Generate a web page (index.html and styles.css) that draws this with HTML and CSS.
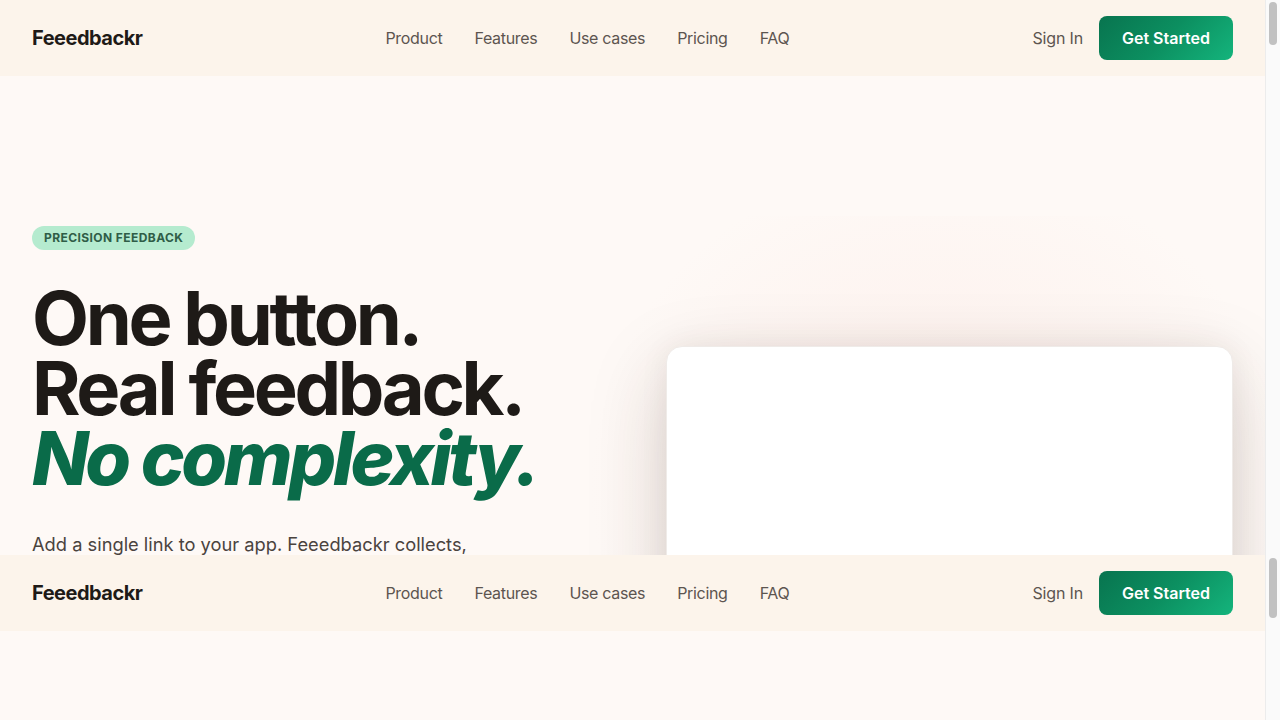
FILE: index.html
```html
<!DOCTYPE html>
<html lang="en">

<head>
    <meta charset="UTF-8">
    <meta name="viewport" content="width=device-width, initial-scale=1.0">
    <title>Feeedbackr</title>
    <link rel="stylesheet" href="styles.css">
</head>

<body>
    <div class="frame frame-top">
        <div class="view">
            <header class="site-header">
                <a class="logo" href="#">Feeedbackr</a>
                <nav class="nav">
                    <a href="#">Product</a>
                    <a href="#">Features</a>
                    <a href="#">Use cases</a>
                    <a href="#">Pricing</a>
                    <a href="#">FAQ</a>
                </nav>
                <div class="header-actions">
                    <a class="sign-in" href="#">Sign In</a>
                    <a class="btn-primary" href="#">Get Started</a>
                </div>
            </header>

            <section class="hero">
                <div class="hero-copy">
                    <span class="eyebrow">Precision feedback</span>
                    <h1 class="hero-title">One button.<br>Real feedback.<br><em>No complexity.</em></h1>
                    <p class="hero-text">Add a single link to your app. Feeedbackr collects,</p>
                </div>
                <div class="hero-visual">
                    <div class="hero-card"></div>
                </div>
            </section>
        </div>
        <div class="scrollbar"><div class="thumb thumb-top"></div></div>
    </div>

    <div class="frame frame-bottom">
        <div class="view">
            <header class="site-header">
                <a class="logo" href="#">Feeedbackr</a>
                <nav class="nav">
                    <a href="#">Product</a>
                    <a href="#">Features</a>
                    <a href="#">Use cases</a>
                    <a href="#">Pricing</a>
                    <a href="#">FAQ</a>
                </nav>
                <div class="header-actions">
                    <a class="sign-in" href="#">Sign In</a>
                    <a class="btn-primary" href="#">Get Started</a>
                </div>
            </header>
        </div>
        <div class="scrollbar"><div class="thumb thumb-bottom"></div></div>
    </div>
</body>

</html>
```

FILE: styles.css
```css
html,
body {
    margin: 0;
    height: 720px;
    overflow: hidden;
}

body {
    font-family: Inter, "Noto Sans", sans-serif;
    background: #fef9f6;
    color: #1e1a17;
}

a {
    text-decoration: none;
    color: inherit;
}

/* two stacked scroll views, each with its own bar */
.frame {
    display: flex;
    background: #fef9f6;
}

.frame-top {
    height: 555px;
}

.frame-bottom {
    height: 165px;
}

.view {
    flex: 1;
    min-width: 0;
    overflow: hidden;
}

.scrollbar {
    width: 15px;
    flex-shrink: 0;
    box-sizing: border-box;
    background: #fafafa;
    border-left: 1px solid #ececec;
    padding: 0 3px 0 3px;
}

.thumb {
    background: #c1c1c1;
    border-radius: 4px;
}

.thumb-top {
    margin-top: 2px;
    height: 43px;
}

.thumb-bottom {
    margin-top: 3px;
    height: 60px;
}

/* header */
.site-header {
    display: flex;
    align-items: center;
    justify-content: space-between;
    height: 76px;
    padding: 0 32px;
    background: #fcf4eb;
    box-sizing: border-box;
}

.logo {
    font-size: 20px;
    font-weight: 700;
    letter-spacing: -0.025em;
    color: #1e1a17;
}

.nav {
    display: flex;
    gap: 32px;
    font-size: 16px;
    letter-spacing: -0.02em;
    color: #5c5550;
}

.header-actions {
    display: flex;
    align-items: center;
    gap: 16px;
}

.sign-in {
    font-size: 16px;
    letter-spacing: -0.01em;
    color: #5c5550;
}

.btn-primary {
    display: inline-block;
    padding: 0 23px;
    height: 44px;
    line-height: 44px;
    border-radius: 8px;
    background: linear-gradient(135deg, #08744f 0%, #0c8f60 50%, #14b47c 100%);
    color: #fff;
    font-size: 16px;
    font-weight: 600;
}

/* hero */
.hero {
    display: grid;
    grid-template-columns: 1fr 1fr;
    gap: 66px;
    padding: 150px 32px 0;
    align-items: start;
}

.eyebrow {
    display: inline-block;
    padding: 0 12px;
    height: 24px;
    line-height: 24px;
    border-radius: 12px;
    background: #b5ebcf;
    color: #2f5d47;
    font-size: 12px;
    font-weight: 700;
    letter-spacing: 0.035em;
    text-transform: uppercase;
}

.hero-title {
    margin: 33px 0 0;
    font-size: 74px;
    line-height: 70px;
    font-weight: 700;
    letter-spacing: -0.045em;
    color: #1e1a17;
}

.hero-title em {
    font-style: italic;
    font-weight: 800;
    color: #0a6b49;
}

.hero-text {
    margin: 36px 0 0;
    max-width: 480px;
    font-size: 18.3px;
    line-height: 30px;
    color: #4a433e;
}

.hero-visual {
    position: relative;
    padding-top: 120px;
}

.hero-visual::before {
    content: "";
    position: absolute;
    left: -80px;
    right: -60px;
    top: -10px;
    height: 600px;
    background: radial-gradient(ellipse at 50% 45%, rgba(252, 228, 222, 0.5), rgba(254, 249, 246, 0) 70%);
}

.hero-card {
    position: relative;
    height: 440px;
    background: #fff;
    border: 1px solid #efebe8;
    border-radius: 16px;
    box-shadow: 0 25px 80px rgba(50, 40, 30, 0.18), 0 0 30px rgba(50, 40, 30, 0.06);
}
```
